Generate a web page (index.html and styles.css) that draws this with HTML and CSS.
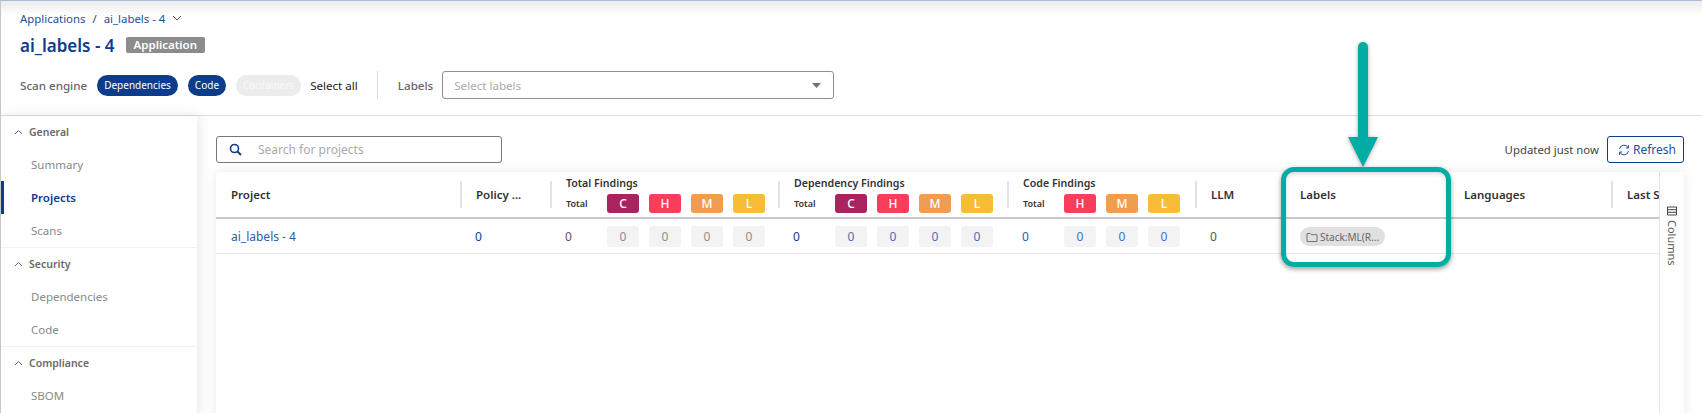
FILE: index.html
```html
<!DOCTYPE html>
<html>
<head>
    <title>ai_labels - 4</title>
    <meta http-equiv="Content-Type" content="text/html;charset=utf-8">
    <link rel="stylesheet" href="styles.css">
</head>
<body>
<div class="page">
    <div class="topbar">
        <div class="crumbs">
            <span>Applications</span><span class="slash">/</span><span>ai_labels - 4</span>
            <svg class="crumb-arrow" width="10" height="6" viewBox="0 0 10 6"><path d="M1 1l4 4 4-4" fill="none" stroke="#555" stroke-width="1"/></svg>
        </div>
        <div class="title-row">
            <h1>ai_labels - 4</h1>
            <span class="badge">Application</span>
        </div>
        <div class="filter-row">
            <span class="filter-label">Scan engine</span>
            <span class="pill">Dependencies</span>
            <span class="pill">Code</span>
            <span class="pill off">Containers</span>
            <span class="select-all">Select all</span>
            <span class="divider"></span>
            <span class="filter-label">Labels</span>
            <div class="label-select">
                <span>Select labels</span>
                <svg width="9" height="5" viewBox="0 0 9 5"><path d="M0 0h9L4.5 5z" fill="#6b7280"/></svg>
            </div>
        </div>
    </div>
    <div class="content">
        <div class="sidebar">
            <div class="side-group">
                <div class="side-head"><svg width="9" height="6" viewBox="0 0 9 6"><path d="M1 5l3.5-3.5L8 5" fill="none" stroke="#666" stroke-width="1"/></svg>General</div>
                <div class="side-item">Summary</div>
                <div class="side-item active">Projects</div>
                <div class="side-item">Scans</div>
            </div>
            <div class="side-group">
                <div class="side-head"><svg width="9" height="6" viewBox="0 0 9 6"><path d="M1 5l3.5-3.5L8 5" fill="none" stroke="#666" stroke-width="1"/></svg>Security</div>
                <div class="side-item">Dependencies</div>
                <div class="side-item">Code</div>
            </div>
            <div class="side-group">
                <div class="side-head"><svg width="9" height="6" viewBox="0 0 9 6"><path d="M1 5l3.5-3.5L8 5" fill="none" stroke="#666" stroke-width="1"/></svg>Compliance</div>
                <div class="side-item">SBOM</div>
            </div>
        </div>
        <div class="main">
            <div class="toolbar">
                <div class="search">
                    <svg width="13" height="13" viewBox="0 0 13 13"><circle cx="5.5" cy="5.5" r="4" fill="none" stroke="#0b3d8c" stroke-width="1.6"/><path d="M8.5 8.5l3.5 3.5" stroke="#0b3d8c" stroke-width="1.8"/></svg>
                    <span>Search for projects</span>
                </div>
                <span class="updated">Updated just now</span>
                <div class="refresh">
                    <svg width="12" height="12" viewBox="0 0 12 12"><path d="M1.5 5A4.6 4.6 0 0 1 10 3.4M10.5 7A4.6 4.6 0 0 1 2 8.6" fill="none" stroke="#1d4f9c" stroke-width="1"/><path d="M10.4 1v3H7.8M1.6 11V8h2.6" fill="none" stroke="#1d4f9c" stroke-width="1"/></svg>
                    Refresh
                </div>
            </div>
            <div class="card">
                <div class="grid-wrap">
                    <div class="grid-row grid-head">
                        <div class="th first">Project</div>
                        <div class="th">Policy ...</div>
                        <div class="th">
                            <div class="th-title">Total Findings</div>
                            <div class="sev"><b>Total</b><i class="c">C</i><i class="h">H</i><i class="m">M</i><i class="l">L</i></div>
                        </div>
                        <div class="th">
                            <div class="th-title">Dependency Findings</div>
                            <div class="sev"><b>Total</b><i class="c">C</i><i class="h">H</i><i class="m">M</i><i class="l">L</i></div>
                        </div>
                        <div class="th">
                            <div class="th-title">Code Findings</div>
                            <div class="sev three"><b>Total</b><i class="h">H</i><i class="m">M</i><i class="l">L</i></div>
                        </div>
                        <div class="th">LLM</div>
                        <div class="th">Labels</div>
                        <div class="th">Languages</div>
                        <div class="th">Last S</div>
                    </div>
                    <div class="grid-row grid-body">
                        <div class="td first link">ai_labels - 4</div>
                        <div class="td navy">0</div>
                        <div class="td">
                            <div class="sev zero"><b class="dark">0</b><i>0</i><i>0</i><i>0</i><i>0</i></div>
                        </div>
                        <div class="td">
                            <div class="sev zero blue"><b class="navy">0</b><i>0</i><i>0</i><i>0</i><i>0</i></div>
                        </div>
                        <div class="td">
                            <div class="sev three zero blue"><b class="link">0</b><i>0</i><i>0</i><i>0</i></div>
                        </div>
                        <div class="td dark">0</div>
                        <div class="td">
                            <span class="tag">
                                <svg width="12" height="10" viewBox="0 0 12 10"><path d="M1 1.5h3.4l1 1.2H11v6.8H1z" fill="none" stroke="#666" stroke-width="0.9"/></svg>
                                Stack:ML(R...
                            </span>
                        </div>
                        <div class="td"></div>
                        <div class="td"></div>
                    </div>
                </div>
                <div class="col-strip">
                    <svg width="10" height="10" viewBox="0 0 10 10"><path d="M.5 1h9v8h-9zM.5 3.7h9M.5 6.3h9" fill="none" stroke="#444" stroke-width="1"/></svg>
                    <span>Columns</span>
                </div>
            </div>
        </div>
    </div>
    <!-- annotation drawn on the screenshot -->
    <svg class="note-arrow" width="40" height="136" viewBox="0 0 40 136">
        <path d="M20 8v92" stroke="#00ada5" stroke-width="10" stroke-linecap="round"/>
        <path d="M5 98h30l-15 30z" fill="#00ada5"/>
    </svg>
    <div class="note-box"></div>
</div>
</body>
</html>
```

FILE: styles.css
```css
html,body{margin:0;padding:0;background:#fff;}
body{font-family:"Noto Sans","Liberation Sans",sans-serif;font-size:12px;color:#333;overflow:hidden;}
.page{position:relative;width:1702px;height:413px;overflow:hidden;box-sizing:border-box;border-top:1px solid #a9bcd8;border-left:1px solid #c6c6c6;}

.topbar{height:115px;box-sizing:border-box;padding:8px 0 0 19px;border-bottom:1px solid #dedede;background:linear-gradient(#ececec,#fff 15px);}
.crumbs{display:flex;align-items:center;height:18px;font-size:11.4px;color:#1d4f9c;}
.crumbs .slash{margin:0 7px;color:#444;}
.crumb-arrow{margin-left:7px;}
.title-row{display:flex;align-items:center;height:26px;margin-top:5px;}
.title-row h1{margin:0;font-size:17px;font-weight:600;color:#0b3d8c;}
.badge{margin-left:11px;background:#8c8c8c;color:#fff;font-size:11.5px;font-weight:600;line-height:16px;padding:0 8px;border-radius:2px;}
.filter-row{display:flex;align-items:center;height:28px;margin-top:13px;font-size:11.6px;}
.filter-label{color:#666;font-weight:500;}
.pill{margin-left:10px;background:#0b3d8c;color:#fff;font-size:10px;line-height:21px;padding:0 7px;border-radius:11px;}
.pill.off{background:#ececec;color:#fafafa;}
.select-all{margin-left:9px;color:#222;}
.divider{width:1px;height:28px;background:#ddd;margin:0 20px 0 19px;}
.label-select{display:flex;align-items:center;justify-content:space-between;box-sizing:border-box;width:392px;height:28px;margin-left:9px;padding:0 12px 0 11px;border:1px solid #8f8f8f;border-radius:3px;color:#aaa;}

.content{display:flex;height:300px;}
.sidebar{width:196px;flex:none;background:#fff;box-shadow:2px 0 12px rgba(0,0,0,.1);position:relative;font-size:11.5px;}
.side-group{border-bottom:1px solid #f1f1f1;}
.side-group:last-child{border-bottom:0;}
.side-head{display:flex;align-items:center;height:32px;padding-left:13px;font-size:10.5px;font-weight:600;color:#6a6a6a;}
.side-head svg{margin-right:6px;}
.side-item{height:33px;line-height:33px;padding-left:30px;color:#8a8a8a;box-sizing:border-box;}
.side-item.active{color:#0b3d8c;font-weight:600;border-left:3px solid #0b3d8c;padding-left:27px;}

.main{flex:1;min-width:0;padding:20px 18px 0 19px;}
.toolbar{display:flex;align-items:center;height:27px;font-size:11.4px;}
.search{display:flex;align-items:center;box-sizing:border-box;width:286px;height:27px;padding-left:12px;border:1px solid #777;border-radius:3px;color:#aaa;font-size:12px;}
.search span{margin-left:16px;}
.updated{margin-left:auto;color:#444;}
.refresh{display:flex;align-items:center;box-sizing:border-box;height:27px;width:77px;margin-left:8px;padding-left:10px;border:1px solid #0b3d8c;border-radius:3px;color:#1d4f9c;font-size:12px;}
.refresh svg{margin-right:3px;}

.card{display:flex;height:300px;margin-top:9px;background:#fff;border-radius:3px;box-shadow:0 0 12px rgba(0,0,0,.09);}
.grid-wrap{flex:1;min-width:0;overflow:hidden;}
.grid-row{display:grid;grid-template-columns:244px 90px 228px 229px 188px 89px 164px 163px 120px;}
.grid-head{height:45px;align-items:center;border-bottom:2px solid #c6c9d2;font-size:11.5px;font-weight:600;color:#333;}
.grid-body{height:33px;padding-top:1px;align-items:center;border-bottom:1px solid #e6e8ee;}
.th{box-sizing:border-box;height:27px;padding-left:14px;border-left:2px solid #dfe3ea;line-height:27px;white-space:nowrap;}
.th.first{border-left:0;padding-left:15px;}
.th:has(.sev){line-height:normal;}
.th-title{font-size:10.6px;line-height:13px;margin-top:-4px;}
.td{padding-left:15px;}
.link{color:#2860a8;}
.navy{color:#0b3d8c;}
.dark{color:#555;}
.sev{display:grid;grid-template-columns:31px repeat(4,32px);column-gap:10px;align-items:center;margin-top:4px;}
.sev.three{grid-template-columns:31px repeat(3,32px);}
.sev b{font-size:9px;font-weight:600;}
.sev i{font-style:normal;text-align:center;color:#fff;height:19px;line-height:19px;border-radius:3px;font-size:12px;font-weight:500;}
.sev i.c{background:#a8235f;}
.sev i.h{background:#fb3d5c;}
.sev i.m{background:#f09d4f;}
.sev i.l{background:#f7bd36;}
.sev.zero{margin-top:0;grid-template-columns:32px repeat(4,32px);}
.sev.three.zero{grid-template-columns:32px repeat(3,32px);}
.sev.zero b{font-size:12px;font-weight:400;}
.sev.zero i{height:21px;line-height:21px;background:#f3f3f3;color:#8c8c8c;font-size:12px;font-weight:400;}
.sev.zero.blue i{color:#3f72b8;}
.tag{display:inline-flex;align-items:center;height:19px;margin-left:1px;padding:0 6px;border-radius:10px;background:#e0e0e0;color:#666;font-size:10px;}
.tag svg{margin-right:2px;}
.col-strip{flex:none;box-sizing:border-box;width:25px;border-left:1px solid #dfe3ea;display:flex;flex-direction:column;align-items:center;padding-top:34px;color:#555;font-size:11px;}
.col-strip svg{margin-bottom:4px;}
.col-strip span{writing-mode:vertical-rl;}

.note-arrow{position:absolute;left:1342px;top:38px;filter:drop-shadow(0 1px 2px rgba(0,0,0,.35));}
.note-box{position:absolute;left:1280px;top:166px;width:170px;height:100px;box-sizing:border-box;border:5px solid #00ada5;border-radius:13px;box-shadow:0 2px 5px rgba(0,0,0,.4),inset 0 2px 4px rgba(0,0,0,.15);}
```
